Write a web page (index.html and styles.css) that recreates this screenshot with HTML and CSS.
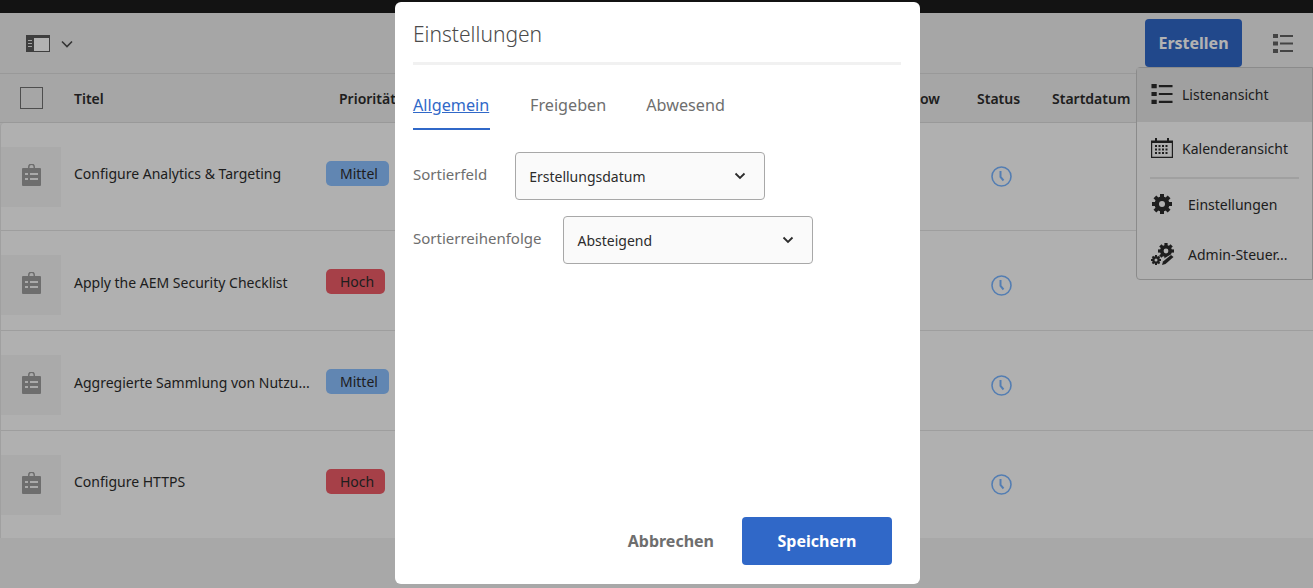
FILE: index.html
```html
<!DOCTYPE html>
<html lang="de">
<head>
  <meta charset="UTF-8" />
  <title>Projekte</title>
  <link rel="stylesheet" href="styles.css">
</head>
<body>
  <svg class="defs" width="0" height="0">
    <symbol id="clip" viewBox="0 0 19 22">
      <path fill="#9e9e9e" d="M1 4h5V3a3.500 3.500 0 0 1 7 0v1h5a1 1 0 0 1 1 1v16a1 1 0 0 1-1 1H1a1 1 0 0 1-1-1V5a1 1 0 0 1 1-1z"/>
      <path fill="#f4f4f4" d="M7.500 4V3a2 2 0 0 1 4 0v1zM3 9h3v2H3zM8 9h8v2H8zM3 14h3v2H3zM8 14h8v2H8z"/>
    </symbol>
    <symbol id="clock" viewBox="0 0 21 21">
      <circle cx="10.500" cy="10.500" r="9.500" fill="none" stroke="#78b4ff" stroke-width="1.600"/>
      <path d="M9.500 5v6l3 3.500" fill="none" stroke="#78b4ff" stroke-width="2"/>
    </symbol>
    <symbol id="gear" viewBox="0 0 20 20">
      <g fill="currentColor">
        <circle cx="10" cy="10" r="7.500"/>
        <rect x="8" y="0" width="4" height="20"/>
        <rect x="8" y="0" width="4" height="20" transform="rotate(45 10 10)"/>
        <rect x="8" y="0" width="4" height="20" transform="rotate(90 10 10)"/>
        <rect x="8" y="0" width="4" height="20" transform="rotate(135 10 10)"/>
      </g>
      <circle cx="10" cy="10" r="3" fill="#fcfcfc"/>
    </symbol>
    <symbol id="list" viewBox="0 0 20 19">
      <path fill="currentColor" d="M0 0h5v4H0zM7 1h13v2H7zM0 7.500h5v4H0zM7 8.500h13v2H7zM0 15h5v4H0zM7 16h13v2H7z"/>
    </symbol>
  </svg>

  <div class="topbar"></div>

  <div class="toolbar">
    <div class="rail-switch">
      <svg width="24" height="17" viewBox="0 0 24 17">
        <path fill="#5a5a5a" d="M0 0h24v17H0z"/>
        <path fill="#ffffff" d="M8 3h15v13H8z"/>
        <path fill="#e8e8e8" d="M2 5h4v1H2zM2 8h4v1H2zM2 11h4v1H2z"/>
      </svg>
      <svg class="chev-small" width="12" height="8" viewBox="0 0 12 8">
        <path d="M1 1.500l5 5 5-5" fill="none" stroke="#4b4b4b" stroke-width="1.600"/>
      </svg>
    </div>
    <button class="create">Erstellen</button>
    <svg class="view-icon"><use href="#list"/></svg>
  </div>

  <div class="grid head">
    <div class="check-cell"><span class="checkbox"></span></div>
    <div>Titel</div>
    <div class="head-prio">Priorität</div>
    <div class="head-flow">Workflow</div>
    <div>Status</div>
    <div>Startdatum</div>
  </div>

  <div class="rows">
    <div class="grid row row-first">
      <div class="thumb"><svg class="clip"><use href="#clip"/></svg></div>
      <div class="title">Configure Analytics &amp; Targeting</div>
      <div class="prio"><span class="badge medium">Mittel</span></div>
      <div class="status"><svg class="clock"><use href="#clock"/></svg></div>
    </div>
    <div class="grid row">
      <div class="thumb"><svg class="clip"><use href="#clip"/></svg></div>
      <div class="title">Apply the AEM Security Checklist</div>
      <div class="prio"><span class="badge high">Hoch</span></div>
      <div class="status"><svg class="clock"><use href="#clock"/></svg></div>
    </div>
    <div class="grid row">
      <div class="thumb"><svg class="clip"><use href="#clip"/></svg></div>
      <div class="title">Aggregierte Sammlung von Nutzu...</div>
      <div class="prio"><span class="badge medium">Mittel</span></div>
      <div class="status"><svg class="clock"><use href="#clock"/></svg></div>
    </div>
    <div class="grid row row-last">
      <div class="thumb"><svg class="clip"><use href="#clip"/></svg></div>
      <div class="title">Configure HTTPS</div>
      <div class="prio"><span class="badge high">Hoch</span></div>
      <div class="status"><svg class="clock"><use href="#clock"/></svg></div>
    </div>
  </div>

  <div class="view-menu">
    <div class="menu-item active"><svg class="menu-icon"><use href="#list"/></svg>Listenansicht</div>
    <div class="menu-item">
      <svg class="menu-icon" viewBox="0 0 22 20">
        <path fill="none" stroke="currentColor" stroke-width="1.200" d="M.6 3h20.800v16.400H.6z"/>
        <path fill="currentColor" d="M4 0h2v4H4zM16 0h2v4h-2zM1 3h20v2H1z"/>
        <path fill="currentColor" d="M4 7h2v2H4zM7.500 7h2v2h-2zM11 7h2v2h-2zM14.500 7h2v2h-2zM4 10.500h2v2H4zM7.500 10.500h2v2h-2zM11 10.500h2v2h-2zM14.500 10.500h2v2h-2zM4 14h2v2H4zM7.500 14h2v2h-2zM11 14h2v2h-2zM14.500 14h2v2h-2z"/>
      </svg>
      Kalenderansicht
    </div>
    <div class="menu-sep"></div>
    <div class="menu-item tool"><svg class="menu-icon gear"><use href="#gear"/></svg>Einstellungen</div>
    <div class="menu-item tool">
      <svg class="menu-icon admin" viewBox="0 0 23 22">
        <use href="#gear" x="7" y="0" width="16" height="16"/>
        <use href="#gear" x="0" y="12" width="10" height="10"/>
        <path fill="#fcfcfc" d="M21.500 10.500l2 3-9 8.500h-5l1-5z"/>
        <path fill="currentColor" d="M20 12l2.500 2-8 7-3.500 1 1-3.500z"/>
      </svg>
      Admin-Steuer...
    </div>
  </div>

  <div class="overlay"></div>

  <div class="dialog-wrap">
    <div class="dialog">
      <h2 class="dialog-title">Einstellungen</h2>
      <div class="tabs">
        <a class="tab selected">Allgemein</a>
        <a class="tab">Freigeben</a>
        <a class="tab">Abwesend</a>
      </div>
      <div class="field field-first">
        <label>Sortierfeld</label>
        <div class="select">Erstellungsdatum
          <svg width="12" height="8" viewBox="0 0 12 8"><path d="M1.500 1.500l4.500 4.500 4.500-4.500" fill="none" stroke="#2c2c2c" stroke-width="1.800"/></svg>
        </div>
      </div>
      <div class="field">
        <label>Sortierreihenfolge</label>
        <div class="select">Absteigend
          <svg width="12" height="8" viewBox="0 0 12 8"><path d="M1.500 1.500l4.500 4.500 4.500-4.500" fill="none" stroke="#2c2c2c" stroke-width="1.800"/></svg>
        </div>
      </div>
      <div class="dialog-foot">
        <button class="cancel">Abbrechen</button>
        <button class="save">Speichern</button>
      </div>
    </div>
  </div>
</body>
</html>
```

FILE: styles.css
```css
* {
  box-sizing: border-box;
}
body {
  margin: 0;
  height: 588px;
  overflow: hidden;
  background: #f1f1f1;
  color: #2c2c2c;
  font-family: "Noto Sans", Arial, sans-serif;
  font-size: 14px;
}
button {
  font-family: inherit;
  border: none;
}
.defs {
  position: absolute;
}
.topbar {
  height: 13px;
  background: #1c1c1c;
}
.toolbar {
  height: 61px;
  display: flex;
  align-items: center;
  background: #eeeeee;
  border-bottom: 1px solid #dcdcdc;
  padding: 0 20px 0 26px;
}
.rail-switch {
  display: flex;
  align-items: center;
  gap: 11px;
  margin-right: auto;
}
.chev-small {
  margin-top: 2px;
}
.create {
  width: 97px;
  height: 48px;
  margin-right: 31px;
  border-radius: 4px;
  background: #3068c8;
  color: #fff;
  font-size: 16px;
  font-weight: 700;
}
.view-icon {
  width: 20px;
  height: 19px;
  color: #626262;
}
.grid {
  display: grid;
  align-items: center;
}
.head {
  grid-template-columns: 74px 265px 0 638px 75px 1fr;
  height: 49px;
  background: #eeeeee;
  border-bottom: 1px solid #dcdcdc;
  font-weight: 600;
}
.head-prio {
  white-space: nowrap;
}
.head-flow {
  text-align: right;
  padding-right: 37px;
}
.check-cell {
  padding-left: 20px;
  display: flex;
}
.checkbox {
  width: 23px;
  height: 22px;
  border: 1px solid #707070;
}
.rows {
  height: 415px;
  background: #fcfcfc;
  border-left: 1px solid #e6e6e6;
  border-radius: 4px 0 0 0;
}
.row {
  grid-template-columns: 73px 252px 651px 1fr;
  height: 100px;
  padding-top: 9px;
  border-bottom: 1px solid #e2e2e2;
}
.row-first {
  height: 108px;
  padding-top: 0;
}
.row-last {
  height: 107px;
  padding-top: 0;
  border-bottom: none;
}
.thumb {
  width: 60px;
  height: 60px;
  background: #f4f4f4;
  display: flex;
  align-items: center;
  justify-content: center;
}
.clip {
  width: 19px;
  height: 22px;
  margin-bottom: 4px;
}
.title {
  white-space: nowrap;
  margin-top: -6px;
}
.prio {
  margin-top: -7px;
  display: flex;
}
.badge {
  height: 25px;
  line-height: 25px;
  padding: 0 11px 0 14px;
  border-radius: 5px;
}
.medium {
  background: #8cc0ff;
}
.high {
  background: #ee5c68;
}
.status {
  padding-left: 14px;
  display: flex;
}
.clock {
  width: 21px;
  height: 21px;
}
.view-menu {
  position: absolute;
  top: 67px;
  right: 0;
  width: 177px;
  height: 213px;
  background: #fcfcfc;
  border: 1px solid #c8c8c8;
  border-radius: 4px 0 0 4px;
}
.menu-item {
  height: 54px;
  display: flex;
  align-items: center;
  gap: 9px;
  padding: 0 12px 2px 14px;
  white-space: nowrap;
}
.menu-item.active {
  background: #e6e6e6;
}
.menu-item.tool {
  gap: 15px;
  height: 50px;
  padding-bottom: 0;
}
.menu-icon {
  width: 22px;
  height: 20px;
  flex: none;
}
.menu-icon.admin {
  width: 23px;
  height: 22px;
}
.menu-item:last-child {
  gap: 14px;
}
.menu-sep {
  height: 2px;
  margin: 1px 13px 0;
  background: #e6e6e6;
}
.overlay {
  position: absolute;
  inset: 0;
  background: rgba(0, 0, 0, 0.3);
}
.dialog-wrap {
  position: absolute;
  inset: 0;
  display: flex;
  justify-content: center;
  padding: 2px 0 4px;
}
.dialog {
  width: 525px;
  margin-left: 2px;
  background: #fff;
  border-radius: 6px;
  padding: 0 19px 19px 18px;
  display: flex;
  flex-direction: column;
}
.dialog-title {
  margin: 0;
  height: 63px;
  padding-top: 16px;
  font-size: 21px;
  line-height: 32px;
  font-weight: 300;
  color: #4b4b4b;
  border-bottom: 3px solid #f1f1f1;
}
.tabs {
  display: flex;
  gap: 40px;
  margin-top: 20px;
}
.tab {
  height: 45px;
  line-height: 40px;
  font-size: 16.2px;
  color: #6e6e6e;
}
.tab.selected {
  width: 77px;
  color: #3068c8;
  text-decoration: underline;
  border-bottom: 2px solid #3068c8;
}
.field {
  display: flex;
  align-items: center;
  gap: 22px;
  margin-top: 16px;
  color: #6e6e6e;
}
.field-first {
  gap: 28px;
  margin-top: 22px;
}
.field label {
  font-size: 15px;
  margin-top: -4px;
}
.select {
  width: 250px;
  height: 48px;
  display: flex;
  align-items: center;
  justify-content: space-between;
  padding: 0 18px 0 13px;
  background: #fafafa;
  border: 1px solid #a8a8a8;
  border-radius: 4px;
  color: #2c2c2c;
}
.dialog-foot {
  margin-top: auto;
  display: flex;
  justify-content: flex-end;
  align-items: center;
  gap: 28px;
  padding-right: 9px;
}
.cancel {
  background: none;
  padding: 0;
  font-size: 16px;
  font-weight: 700;
  color: #6e6e6e;
}
.save {
  width: 150px;
  height: 48px;
  border-radius: 4px;
  background: #3068c8;
  color: #fff;
  font-size: 16px;
  font-weight: 700;
}
```
